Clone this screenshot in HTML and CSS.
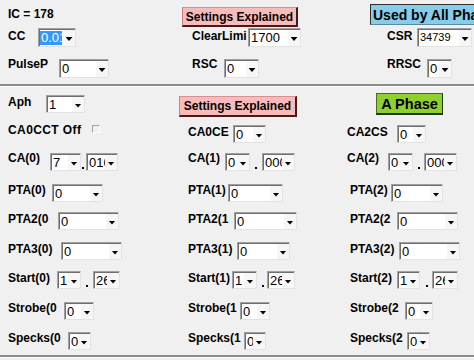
FILE: index.html
```html
<!DOCTYPE html>
<html>
<head>
<meta charset="utf-8">
<link rel="stylesheet" href="styles.css">
</head>
<body>
<div class="form">
  <div class="row ra">
    <div class="cell"><span class="lbl ic">IC = 178</span></div>
    <div class="cell"><span class="xbtn pink b1">Settings Explained</span></div>
    <div class="cell"><span class="xbtn blue">Used by All Phase</span></div>
  </div>
  <div class="row rb">
    <div class="cell"><span class="lbl l30">CC</span><span class="combo tall w38"><span class="val sel">0.01</span><span class="btn"></span></span></div>
    <div class="cell"><span class="lbl l56">ClearLimi</span><span class="combo tall w53"><span class="val">1700</span><span class="btn"></span></span></div>
    <div class="cell"><span class="lbl l30">CSR</span><span class="combo tall w55"><span class="val small">34739</span><span class="btn"></span></span></div>
  </div>
  <div class="row rc">
    <div class="cell"><span class="lbl l51">PulseP</span><span class="combo tall w50"><span class="val">0</span><span class="btn"></span></span></div>
    <div class="cell"><span class="lbl l32">RSC</span><span class="combo tall w35"><span class="val">0</span><span class="btn"></span></span></div>
    <div class="cell"><span class="lbl l40">RRSC</span><span class="combo tall w25"><span class="val">0</span><span class="btn"></span></span></div>
  </div>
  <div class="sep"></div>

  <div class="row r0">
    <div class="cell"><span class="lbl l38">Aph</span><span class="combo w39"><span class="val">1</span><span class="btn"></span></span></div>
    <div class="cell"><span class="xbtn pink b2">Settings Explained</span></div>
    <div class="cell"><span class="xbtn green">A Phase</span></div>
  </div>
  <div class="row r1">
    <div class="cell"><span class="lbl l84 cct">CA0CCT Off</span><span class="check"></span></div>
    <div class="cell"><span class="lbl l45 late">CA0CE</span><span class="combo w33"><span class="val">0</span><span class="btn"></span></span></div>
    <div class="cell"><span class="lbl l50 nudge late">CA2CS</span><span class="combo w29"><span class="val">0</span><span class="btn"></span></span></div>
  </div>
  <div class="row r2">
    <div class="cell"><span class="lbl l42">CA(0)</span>
      <span class="pair"><span class="combo w31"><span class="val">7</span><span class="btn"></span></span><span class="dot g1"></span><span class="combo w32 g2"><span class="val">010</span><span class="btn"></span></span></span></div>
    <div class="cell"><span class="lbl l37">CA(1)</span>
      <span class="pair"><span class="combo w25"><span class="val">0</span><span class="btn"></span></span><span class="dot g5"></span><span class="combo w33 g5"><span class="val">000</span><span class="btn"></span></span></span></div>
    <div class="cell"><span class="lbl l41 nudge">CA(2)</span>
      <span class="pair"><span class="combo w25"><span class="val">0</span><span class="btn"></span></span><span class="dot g5"></span><span class="combo w33 g4"><span class="val">000</span><span class="btn"></span></span></span></div>
  </div>
  <div class="row r3">
    <div class="cell"><span class="lbl l44">PTA(0)</span><span class="combo w51"><span class="val">0</span><span class="btn"></span></span></div>
    <div class="cell"><span class="lbl l40">PTA(1)</span><span class="combo w55"><span class="val">0</span><span class="btn"></span></span></div>
    <div class="cell"><span class="lbl l41">PTA(2)</span><span class="combo w52"><span class="val">0</span><span class="btn"></span></span></div>
  </div>
  <div class="row r4">
    <div class="cell"><span class="lbl l50">PTA2(0</span><span class="combo w61"><span class="val">0</span><span class="btn"></span></span></div>
    <div class="cell"><span class="lbl l46">PTA2(1</span><span class="combo w63"><span class="val">0</span><span class="btn"></span></span></div>
    <div class="cell"><span class="lbl l47">PTA2(2</span><span class="combo w61"><span class="val">0</span><span class="btn"></span></span></div>
  </div>
  <div class="row r5">
    <div class="cell"><span class="lbl l53">PTA3(0)</span><span class="combo w61"><span class="val">0</span><span class="btn"></span></span></div>
    <div class="cell"><span class="lbl l49">PTA3(1)</span><span class="combo w53"><span class="val">0</span><span class="btn"></span></span></div>
    <div class="cell"><span class="lbl l49">PTA3(2)</span><span class="combo w61"><span class="val">0</span><span class="btn"></span></span></div>
  </div>
  <div class="row r6">
    <div class="cell"><span class="lbl l49">Start(0)</span>
      <span class="pair"><span class="combo w24"><span class="val">1</span><span class="btn"></span></span><span class="dot g5"></span><span class="combo w27 g5"><span class="val">26</span><span class="btn"></span></span></span></div>
    <div class="cell"><span class="lbl l44">Start(1)</span>
      <span class="pair"><span class="combo w25"><span class="val">1</span><span class="btn"></span></span><span class="dot g5"></span><span class="combo w28 g3"><span class="val">26</span><span class="btn"></span></span></span></div>
    <div class="cell"><span class="lbl l47">Start(2)</span>
      <span class="pair"><span class="combo w23"><span class="val">1</span><span class="btn"></span></span><span class="dot g6"></span><span class="combo w26 g4"><span class="val">26</span><span class="btn"></span></span></span></div>
  </div>
  <div class="row r7">
    <div class="cell"><span class="lbl l56">Strobe(0</span><span class="combo w30"><span class="val">0</span><span class="btn"></span></span></div>
    <div class="cell"><span class="lbl l52">Strobe(1</span><span class="combo w30"><span class="val">0</span><span class="btn"></span></span></div>
    <div class="cell"><span class="lbl l55">Strobe(2</span><span class="combo w28"><span class="val">0</span><span class="btn"></span></span></div>
  </div>
  <div class="row r8">
    <div class="cell"><span class="lbl l60">Specks(0</span><span class="combo w23"><span class="val">0</span><span class="btn"></span></span></div>
    <div class="cell"><span class="lbl l56">Specks(1</span><span class="combo w22"><span class="val">0</span><span class="btn"></span></span></div>
    <div class="cell"><span class="lbl l57">Specks(2</span><span class="combo w23"><span class="val">0</span><span class="btn"></span></span></div>
  </div>
  <div class="sep"></div>
</div>
</body>
</html>
```
FILE: styles.css
```css
* { box-sizing: border-box; }
html, body { margin: 0; padding: 0; }
body {
  width: 474px;
  height: 360px;
  overflow: hidden;
  background: #f0f0f0;
  font-family: "Liberation Sans", Arial, sans-serif;
  color: #000;
}
.form { width: 474px; }

.row {
  display: grid;
  padding-left: 8px;
  align-items: start;
  grid-template-columns: 180px 162px 1fr;
  --lt: 0px;
  --ct: 1px;
}
.cell { display: flex; align-items: flex-start; white-space: nowrap; min-width: 0; }

.ra { height: 28px; grid-template-columns: 174px 188px 1fr; }
.rb { height: 29px; grid-template-columns: 184px 195px 1fr; --lt: 1px; --ct: 0px; }
.rc { height: 27px; grid-template-columns: 184px 195px 1fr; --lt: 0px; --ct: 2px; }
.r0 { height: 34px; grid-template-columns: 171px 197px 1fr; --lt: 8px; --ct: 8px; }
.r1 { height: 30px; --lt: 2px; --ct: 4px; }
.r2 { height: 32px; --ct: 2px; }
.r3 { height: 29px; }
.r4 { height: 29px; --ct: 0px; }
.r5 { height: 30px; --lt: 1px; }
.r6 { height: 30px; --ct: 0px; }
.r7 { height: 30px; }
.r8 { height: 24px; }

.lbl {
  flex: none;
  font-weight: bold;
  font-size: 12px;
  line-height: 14px;
  margin-top: var(--lt);
}
.ic { margin-top: 7px; }
.late { margin-top: 4px; }
.nudge { margin-left: -3px; }

.l30 { width: 30px; } .l32 { width: 32px; } .l37 { width: 37px; } .l38 { width: 38px; }
.l40 { width: 40px; } .l41 { width: 41px; } .l42 { width: 42px; } .l44 { width: 44px; }
.l45 { width: 45px; } .l46 { width: 46px; } .l47 { width: 47px; } .l49 { width: 49px; }
.l50 { width: 50px; } .l51 { width: 51px; } .l52 { width: 52px; } .l53 { width: 53px; }
.l55 { width: 55px; } .l56 { width: 56px; } .l57 { width: 57px; } .l60 { width: 60px; }
.l84 { width: 84px; }
.cct { letter-spacing: 0.4px; }

.pair { display: flex; align-items: flex-start; flex: none; margin-top: var(--ct); }
.combo {
  flex: none;
  display: flex;
  height: 18px;
  margin-top: var(--ct);
  background: #fff;
  border: 1px solid;
  border-color: #a0a0a0 #e3e3e3 #e3e3e3 #a0a0a0;
  box-shadow: inset 1px 1px 0 #6f6f6f;
  padding: 1px 0 0 1px;
  overflow: hidden;
}
.pair .combo { margin-top: 0; }
.combo.tall { height: 19px; }
.val {
  flex: 1 1 auto;
  min-width: 0;
  overflow: hidden;
  font-size: 13px;
  line-height: 15px;
  padding-left: 1px;
  white-space: nowrap;
}
.val.small { font-size: 11px; padding-left: 1px; }
.val.sel {
  background: #3399ff;
  color: #fff;
  margin: 1px 1px 1px 0;
  line-height: 13px;
  padding-left: 1px;
}
.btn {
  flex: none;
  width: 12px;
  display: flex;
  align-items: center;
  justify-content: center;
  padding-top: 2px;
  background: #f6f6f6;
}
.btn::after {
  content: "";
  width: 7px;
  height: 4px;
  background: #000;
  clip-path: polygon(0 0, 100% 0, 50% 100%);
}

.w22 { width: 22px; } .w23 { width: 23px; } .w24 { width: 24px; } .w25 { width: 25px; }
.w26 { width: 26px; } .w27 { width: 27px; } .w28 { width: 28px; } .w29 { width: 29px; }
.w30 { width: 30px; } .w31 { width: 31px; } .w32 { width: 32px; } .w33 { width: 33px; }
.w35 { width: 35px; } .w38 { width: 38px; } .w39 { width: 39px; } .w50 { width: 50px; }
.w51 { width: 51px; } .w52 { width: 52px; } .w53 { width: 53px; } .w55 { width: 55px; }
.w61 { width: 61px; } .w63 { width: 63px; }

.dot { flex: none; width: 2px; height: 2px; background: #000; margin-top: 14px; }
.g1 { margin-left: 1px; } .g2 { margin-left: 2px; } .g3 { margin-left: 3px; }
.g4 { margin-left: 4px; } .g5 { margin-left: 5px; } .g6 { margin-left: 6px; }

.check {
  flex: none;
  width: 8px;
  height: 8px;
  margin-top: 4px;
  border-top: 1px solid #a0a0a0;
  border-left: 1px solid #a0a0a0;
  border-right: 1px solid #fff;
  border-bottom: 1px solid #fff;
}

.xbtn {
  flex: none;
  display: flex;
  align-items: center;
  justify-content: center;
  font-weight: bold;
  white-space: nowrap;
}
.pink {
  font-size: 12px;
  background: #f9baba;
  border: 1px solid;
  border-color: #d89090 #4a1818 #4a1818 #c88080;
  border-right-width: 2px;
  border-bottom-width: 2px;
}
.b1 { width: 116px; height: 20px; margin-top: 7px; }
.b2 { width: 118px; height: 21px; margin-top: 9px; }
.blue {
  font-size: 14px;
  background: #86cdea;
  border-top: 1px solid #303030;
  border-left: 1px solid #303030;
  border-bottom: 1px solid #5a8aa0;
  width: 120px;
  height: 21px;
  margin-top: 4px;
  justify-content: flex-start;
  padding-left: 2px;
}
.green {
  font-size: 14.5px;
  background: #8fd12c;
  border: 1px solid;
  border-color: #4a6a20 #203808 #203808 #4a6a20;
  border-bottom-width: 2px;
  width: 67px;
  height: 22px;
  margin-top: 6px;
}

.sep {
  height: 3px;
  border-top: 2px solid #8c8c8c;
  border-bottom: 1px solid #ffffff;
}
```
